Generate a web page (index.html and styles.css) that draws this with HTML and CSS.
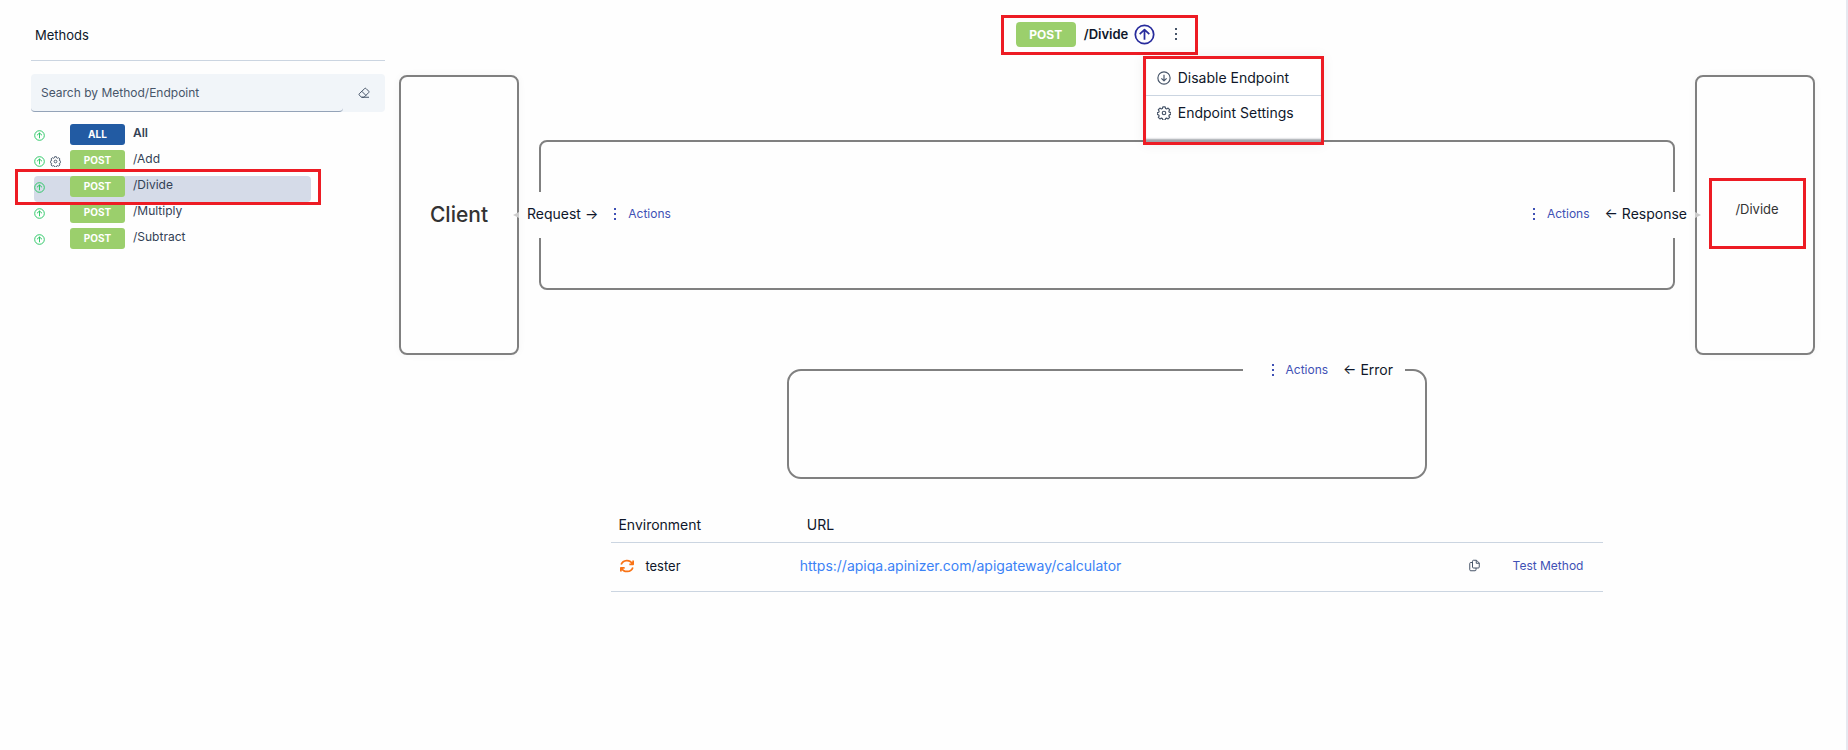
FILE: index.html
```html
<!DOCTYPE html>
<html lang="en">
<head>
    <meta charset="UTF-8">
    <meta name="viewport" content="width=device-width, initial-scale=1.0">
    <title>API Methods</title>
    <link rel="stylesheet" href="styles.css">
</head>
<body>

    <!-- Shared icons -->
    <svg class="icon-defs" aria-hidden="true">
        <symbol id="icon-up" viewBox="0 0 24 24">
            <circle cx="12" cy="12" r="10.5"/>
            <path d="M12 18V6.500M6.500 11.500L12 6.500L17.500 11.500"/>
        </symbol>
        <symbol id="icon-down" viewBox="0 0 24 24">
            <circle cx="12" cy="12" r="10.500"/>
            <path d="M12 6.500V17M7.500 12.500L12 17L16.500 12.500"/>
        </symbol>
        <symbol id="icon-gear" viewBox="0 0 24 24">
            <path d="M10 1.500h4l.7 2.800 1.800.8 2.500-1.500 2.700 2.800-1.400 2.500.700 1.700 2.700.8v3l-2.700.9-.7 1.700 1.400 2.500-2.700 2.700-2.500-1.400-1.800.8-.7 2.700h-4l-.7-2.700-1.800-.8-2.500 1.400-2.700-2.700 1.400-2.500-.7-1.700-2.500-.9v-3l2.500-.8.700-1.700-1.400-2.500 2.700-2.800 2.500 1.500 1.800-.8z"/>
            <circle cx="12" cy="12" r="3"/>
        </symbol>
        <symbol id="icon-dots" viewBox="0 0 4 14">
            <path d="M1 1h2v2H1zM1 6h2v2H1zM1 11h2v2H1z"/>
        </symbol>
    </svg>

    <div class="page">

        <!-- Method list -->
        <aside class="sidebar">
            <h2>Methods</h2>
            <div class="search">
                <input type="text" placeholder="Search by Method/Endpoint" aria-label="Search by Method/Endpoint">
                <button type="button" aria-label="Clear search">
                    <svg class="icon icon-eraser" viewBox="0 0 24 24">
                        <path d="M7 20.500L2.500 16q-1-1.200 0-2.500L13.500 3q1.300-1 2.500 0l5.500 5.500q1 1.300 0 2.500L12 20.500zM7.500 8.500l8.500 8.500M7 20.500h15"/>
                    </svg>
                </button>
            </div>
            <ul class="methods">
                <li>
                    <span class="status"><svg class="icon icon-on"><use href="#icon-up"/></svg></span>
                    <span class="badge badge-all">ALL</span>
                    <a href="#all" class="all">All</a>
                </li>
                <li>
                    <span class="status">
                        <svg class="icon icon-on"><use href="#icon-up"/></svg>
                        <svg class="icon icon-set"><use href="#icon-gear"/></svg>
                    </span>
                    <span class="badge">POST</span>
                    <a href="#add">/Add</a>
                </li>
                <li class="selected">
                    <span class="status"><svg class="icon icon-on"><use href="#icon-up"/></svg></span>
                    <span class="badge">POST</span>
                    <a href="#divide">/Divide</a>
                </li>
                <li>
                    <span class="status"><svg class="icon icon-on"><use href="#icon-up"/></svg></span>
                    <span class="badge">POST</span>
                    <a href="#multiply">/Multiply</a>
                </li>
                <li>
                    <span class="status"><svg class="icon icon-on"><use href="#icon-up"/></svg></span>
                    <span class="badge">POST</span>
                    <a href="#subtract">/Subtract</a>
                </li>
            </ul>
        </aside>

        <!-- Flow of the selected method -->
        <main class="flow">
            <div class="endpoint marked">
                <span class="badge badge-large">POST</span>
                <h1>/Divide</h1>
                <svg class="icon icon-state"><use href="#icon-up"/></svg>
                <button type="button" class="more" aria-label="Endpoint menu">
                    <svg class="dots"><use href="#icon-dots"/></svg>
                </button>
                <div class="menu marked">
                    <button type="button"><svg class="icon"><use href="#icon-down"/></svg>Disable Endpoint</button>
                    <button type="button"><svg class="icon"><use href="#icon-gear"/></svg>Endpoint Settings</button>
                </div>
            </div>

            <section class="pipeline">
                <div class="node client">Client</div>
                <div class="stream">
                    <div class="label label-request">
                        <span>Request →</span>
                        <button type="button" class="actions"><svg class="dots"><use href="#icon-dots"/></svg>Actions</button>
                    </div>
                    <div class="label label-response">
                        <button type="button" class="actions"><svg class="dots"><use href="#icon-dots"/></svg>Actions</button>
                        <span>← Response</span>
                    </div>
                </div>
                <div class="node backend">
                    <span class="target marked">/Divide</span>
                </div>
            </section>

            <section class="error">
                <div class="label label-error">
                    <button type="button" class="actions"><svg class="dots"><use href="#icon-dots"/></svg>Actions</button>
                    <span>← Error</span>
                </div>
            </section>

            <table class="environments">
                <thead>
                    <tr>
                        <th class="col-env">Environment</th>
                        <th>URL</th>
                        <th class="col-copy"></th>
                        <th class="col-test"></th>
                    </tr>
                </thead>
                <tbody>
                    <tr>
                        <td>
                            <div class="env">
                                <svg class="icon icon-sync" viewBox="0 0 24 24">
                                    <path d="M2 9.500C5 1 17 0 21.500 8.500M22.500 2.500v6.500h-6.500M22 14.500C19 23 7 24 2.500 15.500M1.500 21.500V15h6.500"/>
                                </svg>
                                tester
                            </div>
                        </td>
                        <td><a href="https://apiqa.apinizer.com/apigateway/calculator">https://apiqa.apinizer.com/apigateway/calculator</a></td>
                        <td>
                            <button type="button" class="copy" aria-label="Copy URL">
                                <svg class="icon icon-copy" viewBox="0 0 22 24">
                                    <path d="M9 1.500h6l5.500 5.500v8q0 2-2 2H9q-2 0-2-2V3.500q0-2 2-2zM14.500 1.500v6h6M7 6H3.500q-2 0-2 2v12.500q0 2 2 2H12q2 0 2-2V17"/>
                                </svg>
                            </button>
                        </td>
                        <td><button type="button" class="test">Test Method</button></td>
                    </tr>
                </tbody>
            </table>
        </main>

    </div>

</body>
</html>
```

FILE: styles.css
```css
* {
    box-sizing: border-box;
}
body {
    font-family: 'Inter', 'Liberation Sans', sans-serif;
    font-size: 14px;
    line-height: 20px;
    color: #0f172a;
    background-color: #fefefe;
    margin: 0;
}
button {
    font: inherit;
    color: inherit;
    background: none;
    border: none;
    padding: 0;
    cursor: pointer;
}
a {
    text-decoration: none;
}
.page {
    display: grid;
    grid-template-columns: 1fr 4fr;
    gap: 14px;
    min-height: 100vh;
    padding: 0 31px;
    border-right: 2px solid #e6e8f0;
}

/* Icons */
.icon-defs {
    display: none;
}
.icon {
    width: 14px;
    height: 14px;
    flex: none;
    fill: none;
    stroke: #475569;
    stroke-width: 2;
    stroke-linejoin: round;
}
.dots {
    width: 4px;
    height: 14px;
    fill: currentColor;
}

/* Highlight frame */
.marked {
    border: 3px solid #ed1c24;
}

/* Method list */
.sidebar {
    padding-top: 25px;
}
.sidebar h2 {
    font-size: 13px;
    font-weight: 400;
    margin: 0 0 13px;
    padding: 0 4px 15px;
    border-bottom: 1px solid #cbd5e1;
}
.search {
    display: flex;
    height: 38px;
    background-color: #f1f5f9;
    border-radius: 4px;
}
.search input {
    flex: 1;
    min-width: 0;
    font: inherit;
    font-size: 12px;
    padding: 0 10px;
    background: none;
    border: none;
    border-bottom: 1px solid #94a3b8;
    border-radius: 4px;
}
.search input::placeholder {
    color: #475569;
    opacity: 1;
}
.search button {
    width: 42px;
}
.icon-eraser {
    width: 12px;
    height: 12px;
    display: block;
    margin: 0 auto;
}
.methods {
    list-style: none;
    margin: 12px 0 0 3px;
    padding: 0;
    width: 277px;
}
.methods li {
    position: relative;
    display: flex;
    align-items: flex-start;
    height: 26px;
    font-size: 12px;
    border-radius: 4px;
}
.methods .selected {
    background-color: #d5dbe8;
}
.methods .selected::after {
    content: "";
    position: absolute;
    inset: -7px -10px -3px -19px;
    border: 3px solid #ed1c24;
    z-index: 1;
}
.status {
    display: flex;
    align-items: center;
    gap: 5px;
    width: 36px;
    height: 22px;
}
.status .icon {
    width: 11px;
    height: 11px;
}
.status .icon-on {
    stroke: #22c55e;
}
.badge {
    width: 55px;
    height: 21px;
    border-radius: 3px;
    background-color: #9bcf6c;
    color: white;
    font-size: 10px;
    line-height: 21px;
    font-weight: 700;
    text-align: center;
}
.badge-all {
    background-color: #225ba3;
}
.methods a {
    margin-left: 8px;
    line-height: 18px;
    color: #334155;
}
.methods .all {
    font-weight: 600;
}

/* Selected endpoint */
.flow {
    display: flex;
    flex-direction: column;
    align-items: center;
    padding-top: 15px;
}
.endpoint {
    position: relative;
    display: flex;
    align-items: center;
    height: 40px;
    margin: 0 15px 20px 0;
    padding: 0 12px 2px;
}
.endpoint h1 {
    font-size: 13px;
    font-weight: 600;
    margin: 0 6px 0 8px;
}
.endpoint .badge-large {
    width: 60px;
    height: 25px;
    font-size: 12px;
    line-height: 25px;
    border-radius: 4px;
}
.icon-state {
    width: 21px;
    height: 21px;
    stroke: #272b9c;
}
.more {
    display: flex;
    margin-left: 19px;
    padding-right: 5px;
    color: #475569;
}
.menu {
    position: absolute;
    z-index: 1;
    top: 38px;
    left: 139px;
    width: 181px;
    height: 89px;
    padding-top: 2px;
    background-color: white;
    box-shadow: inset 0 -4px 2px -1px #a0a4aa, 0 0 12px rgba(0, 0, 0, 0.06);
}
.menu button {
    display: flex;
    align-items: center;
    gap: 7px;
    width: 100%;
    height: 34px;
    padding-left: 11px;
}
.menu button + button {
    border-top: 1px solid #cbd5e1;
}

/* Pipeline */
.pipeline {
    display: flex;
    align-items: center;
    gap: 20px;
    width: 100%;
}
.node {
    position: relative;
    display: flex;
    align-items: center;
    justify-content: center;
    width: 120px;
    height: 280px;
    border: 2px solid #808080;
    border-radius: 8px;
    box-shadow: 0 0 8px rgba(0, 0, 0, 0.04);
}
.node::after {
    content: "";
    position: absolute;
    border: 3px solid transparent;
}
.client {
    font-size: 21px;
    font-weight: 500;
    color: #333;
}
.client::after {
    right: -2px;
    border-right: 6px solid #ccc;
    border-left: none;
}
.backend::after {
    left: -2px;
    border-left: 6px solid #ccc;
    border-right: none;
}
.target {
    width: 97px;
    height: 71px;
    padding-top: 19px;
    margin: 0 0 4px 4px;
    font-size: 13px;
    line-height: 18px;
    text-align: center;
    color: #333;
}
.stream {
    flex: 1;
    display: flex;
    align-items: center;
    justify-content: space-between;
    height: 150px;
    border: 2px solid #808080;
    border-radius: 8px;
}
.label {
    display: flex;
    align-items: center;
    gap: 15px;
    height: 46px;
    padding-bottom: 2px;
    background-color: #fefefe;
}
.label-request {
    margin-left: -21px;
    padding-left: 7px;
}
.label-response {
    margin-right: -21px;
    padding-right: 7px;
}
.actions {
    display: flex;
    align-items: center;
    gap: 11px;
    font-size: 12px;
    color: #3f51b5;
}

/* Error flow */
.error {
    display: flex;
    align-items: flex-start;
    justify-content: flex-end;
    width: 640px;
    height: 110px;
    margin-top: 14px;
    padding-right: 20px;
    border: 2px solid #808080;
    border-radius: 14px;
}
.label-error {
    height: 20px;
    margin-top: -11px;
    padding: 0 12px 0 28px;
}

/* Environments */
.environments {
    width: 70%;
    margin-top: 30px;
    border-collapse: collapse;
    table-layout: fixed;
}
.environments th, .environments td {
    text-align: left;
    border-bottom: 1px solid #cbd5e1;
}
.environments th {
    height: 33px;
    padding: 0 7px;
    font-weight: 400;
}
.environments td {
    height: 49px;
    padding: 0 0 2px;
}
.environments td a {
    color: #3b82f6;
}
.col-env {
    width: 19%;
}
.col-copy {
    width: 44px;
}
.col-test {
    width: 90px;
}
.env {
    display: flex;
    align-items: center;
    gap: 11px;
    padding-left: 9px;
    font-size: 13px;
}
.icon-sync {
    stroke: #f97316;
    stroke-width: 3;
}
.copy {
    display: block;
}
.icon-copy {
    display: block;
    width: 11px;
    height: 13px;
}
.test {
    font-size: 12px;
    color: #3f51b5;
}
```
